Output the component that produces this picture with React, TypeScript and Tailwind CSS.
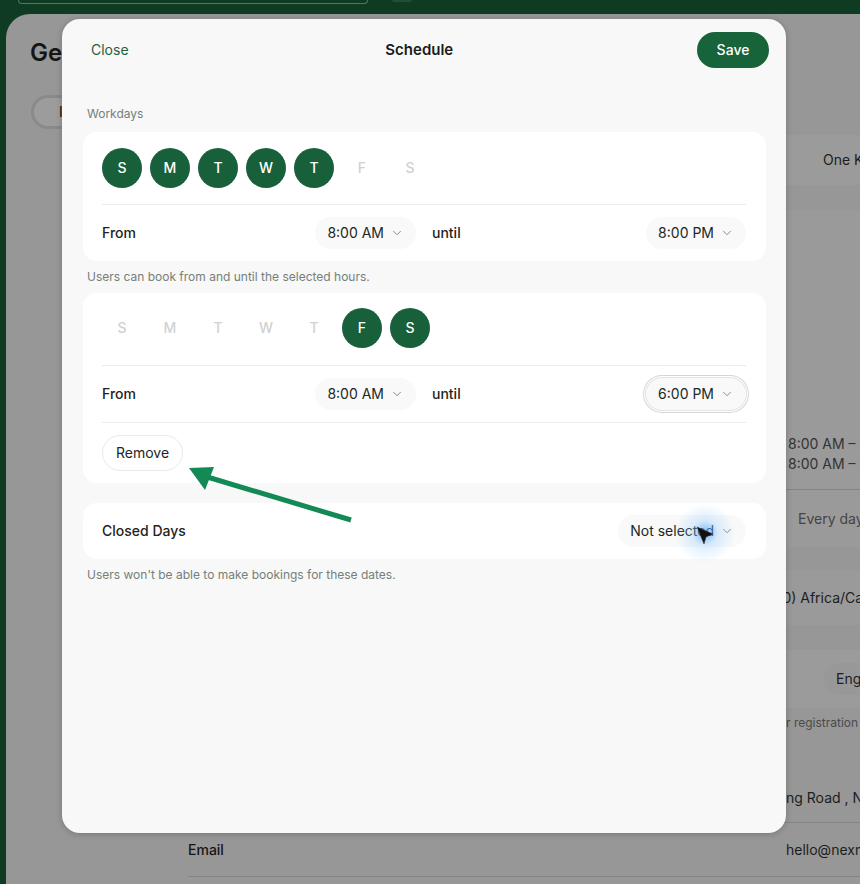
import React from 'react';
import { ChevronDown } from 'lucide-react';

const DAYS = ['S', 'M', 'T', 'W', 'T', 'F', 'S'];

const DayPicker: React.FC<{ active: number[]; className: string }> = ({ active, className }) => (
  <div className={`flex gap-2 border-b border-[#ebedec] ${className}`}>
    {DAYS.map((d, i) => (
      <div
        key={i}
        className={`w-10 h-10 rounded-full flex items-center justify-center text-sm font-medium ${
          active.includes(i) ? 'bg-[#17603a] text-white' : 'text-[#cfd2d0]'
        }`}
      >
        {d}
      </div>
    ))}
  </div>
);

const Pill: React.FC<{ label: string; focused?: boolean }> = ({ label, focused }) => (
  <div
    className={`h-8 px-3 rounded-full bg-[#f8f9f8] flex items-center gap-1.5 text-sm text-[#222724] ${
      focused ? 'shadow-[0_0_0_1px_#e0e4e2,0_0_0_2px_#ffffff,0_0_0_3px_#d2d7d4]' : ''
    }`}
  >
    <span>{label}</span>
    <ChevronDown size={14} strokeWidth={1.5} className="text-[#7a807c]" />
  </div>
);

const HoursRow: React.FC<{ until: string; focused?: boolean }> = ({ until, focused }) => (
  <div className="grid grid-cols-2 gap-4">
    <div className="flex items-center justify-between">
      <span className="text-sm font-medium text-[#1f2421]">From</span>
      <Pill label="8:00 AM" />
    </div>
    <div className="flex items-center justify-between">
      <span className="text-sm font-medium text-[#1f2421]">until</span>
      <Pill label={until} focused={focused} />
    </div>
  </div>
);

const Hint: React.FC<{ children: React.ReactNode }> = ({ children }) => (
  <p className="px-1 text-xs leading-4 text-[#748079]">{children}</p>
);

export default function App() {
  return (
    <div className="relative w-[860px] h-[884px] overflow-hidden bg-[#0e3b22] font-['Inter',sans-serif]">
      {/* Top bar, mostly cut off */}
      <div className="h-[14px] flex items-start gap-6 pl-[18px]">
        <div className="w-[350px] h-[4px] rounded-b-[6px] border-b border-x border-[#4b7a60]" />
        <div className="w-5 h-[2px] rounded-b-full bg-[#1f4f36]" />
      </div>

      {/* Dimmed page behind the dialog */}
      <div className="ml-[6px] h-[870px] rounded-tl-[24px] bg-[#979797] overflow-hidden">
        <h1 className="pt-[25px] pl-6 text-2xl leading-7 font-semibold text-[#151515]">General</h1>
        <div className="mt-7 ml-[25px] w-[200px] h-[34px] rounded-full border-[3px] border-[#8a8a8a] bg-[#9c9c9c] pl-[25px] flex items-center text-sm text-[#151515]">
          Information
        </div>

        <div className="mt-[6px] ml-[162px] w-[800px] text-sm text-[#1d1d1d]">
          <div className="h-[50px] bg-[#9b9b9b] pl-[655px] flex items-center">One Kitchen</div>

          <div className="mt-[25px] h-[337px] bg-[#9a9a9a] pl-5 flex flex-col">
            <div className="h-[208px]" />
            <div className="h-[72px] border-b border-[#848484] pl-[600px] flex flex-col justify-center text-[#333333]">
              <span>8:00 AM – 8:00 PM</span>
              <span>8:00 AM – 6:00 PM</span>
            </div>
            <div className="flex-1 pl-[610px] flex items-center text-[#444444]">Every day</div>
          </div>

          <div className="mt-[23px] h-[55px] bg-[#9a9a9a] pl-[548px] flex items-center">(GMT+2:00) Africa/Cairo</div>

          <div className="mt-[25px] h-[58px] bg-[#9b9b9b] pl-[668px] flex items-center">
            <span className="h-8 px-3 -ml-3 rounded-full bg-[#989898] flex items-center">English</span>
          </div>
          <p className="h-[30px] pl-[618px] flex items-center text-xs text-[#4a4a4a]">
            r registration emails
          </p>

          <div className="mt-[32px] ml-5 h-[53px] border-b border-[#848484] pl-[598px] pt-[3px] flex items-center">
            ng Road , New Cairo
          </div>
          <div className="ml-5 h-[54px] border-b border-[#848484] flex items-center">
            <span className="w-[598px] font-medium text-[#151515]">Email</span>
            <span>hello@nexmind.com</span>
          </div>
        </div>
      </div>

      {/* Schedule dialog */}
      <div className="absolute left-[62px] top-[19px] w-[724px] h-[814px] rounded-[18px] bg-[#f8f8f8] shadow-[0_1px_6px_rgba(0,0,0,0.22)] pl-[21px] pr-5">
        <div className="-ml-[5px] -mr-[3px] pt-[13px] flex items-center justify-between">
          <button className="h-9 px-[13px] text-sm text-[#1f6141]">Close</button>
          <h2 className="text-[15px] font-semibold text-[#1a1d1b]">Schedule</h2>
          <button className="w-[72px] h-9 rounded-full bg-[#17633a] text-sm font-medium text-white">Save</button>
        </div>

        <div className="mt-[38px] mb-[10px]">
          <Hint>Workdays</Hint>
        </div>

        <div className="bg-white rounded-[14px] pl-[19px] pr-5 pt-4 pb-3">
          <DayPicker active={[0, 1, 2, 3, 4]} className="pb-4" />
          <div className="pt-3">
            <HoursRow until="8:00 PM" />
          </div>
        </div>
        <div className="mt-2 mb-2">
          <Hint>Users can book from and until the selected hours.</Hint>
        </div>

        <div className="bg-white rounded-[14px] pl-[19px] pr-5 pt-[15px] pb-3">
          <DayPicker active={[5, 6]} className="pb-[17px]" />
          <div className="py-3 border-b border-[#ebedec]">
            <HoursRow until="6:00 PM" focused />
          </div>
          <button className="mt-3 w-[81px] h-9 rounded-full border border-[#e8eae9] bg-white text-sm text-[#222724]">
            Remove
          </button>
        </div>

        <div className="mt-5 h-14 bg-white rounded-[14px] pl-[19px] pr-5 flex items-center justify-between">
          <span className="text-sm font-medium text-[#1f2421]">Closed Days</span>
          <Pill label="Not selected" />
        </div>
        <div className="mt-2">
          <Hint>Users won't be able to make bookings for these dates.</Hint>
        </div>
      </div>

      {/* Annotation arrow */}
      <svg className="absolute left-0 top-0 pointer-events-none" width="860" height="884" viewBox="0 0 860 884" fill="none">
        <path d="M351 520 L204 476" stroke="#138a56" strokeWidth="5" />
        <polygon points="189,468 214,467 205,490" fill="#138a56" />
      </svg>

      {/* Cursor highlight */}
      <div className="absolute left-[675px] top-[503px] w-[60px] h-[60px] rounded-full bg-[radial-gradient(circle,rgba(70,160,255,0.7)_0%,rgba(140,200,255,0.3)_30%,rgba(255,255,255,0)_70%)]" />
      <svg className="absolute left-[694px] top-[524px]" width="22" height="22" viewBox="0 0 22 22">
        <polygon points="3,3 19,10 12,13 10,20" fill="#111111" stroke="#333333" strokeWidth="0.5" />
      </svg>
    </div>
  );
}
